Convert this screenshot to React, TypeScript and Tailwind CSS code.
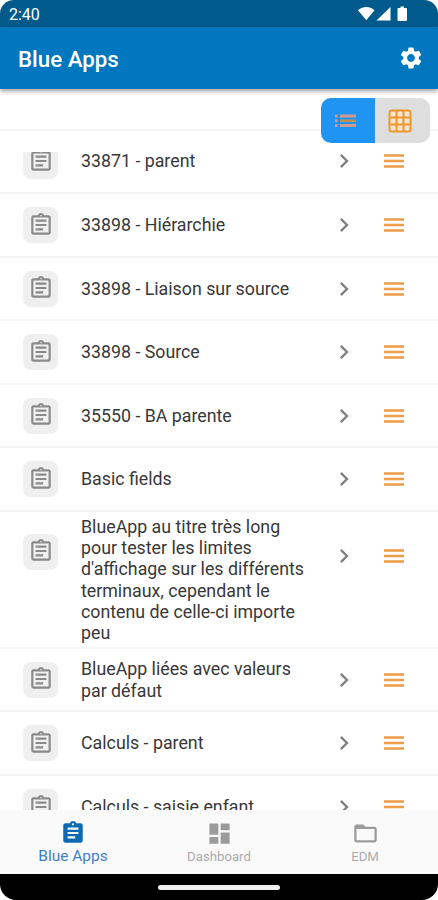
import React from 'react';
import { MdAssignment, MdChevronRight, MdDashboard, MdFolderOpen, MdOutlineAssignment, MdSettings } from 'react-icons/md';

interface AppItem {
  title: string;
  height: string;
  tall?: boolean;
}

const items: AppItem[] = [
  { title: '33871 - parent', height: 'h-[64px]' },
  { title: '33898 - Hiérarchie', height: 'h-[64px]' },
  { title: '33898 - Liaison sur source', height: 'h-[63px]' },
  { title: '33898 - Source', height: 'h-[64px]' },
  { title: '35550 - BA parente', height: 'h-[63px]' },
  { title: 'Basic fields', height: 'h-[64px]' },
  {
    title: "BlueApp au titre très long pour tester les limites d'affichage sur les différents terminaux, cependant le contenu de celle-ci importe peu",
    height: 'h-[137px]',
    tall: true,
  },
  { title: 'BlueApp liées avec valeurs par défaut', height: 'h-[63px]' },
  { title: 'Calculs - parent', height: 'h-[64px]' },
  { title: 'Calculs - saisie enfant', height: 'h-[64px]' },
];

const StatusBar: React.FC = () => (
  <div className="h-[27px] shrink-0 bg-[#005a8c] flex items-center justify-between pl-[9px] pr-[30px] text-white">
    <span className="text-[16px] leading-none mt-[3px]">2:40</span>
    <svg className="w-[51px] h-[17px]" viewBox="0 0 51 17" fill="currentColor">
      <path d="M1 5.200C6 1 12.500 1 17.500 5.200L9.300 15.200z" />
      <path d="M33.500 2v13.500H19.500z" />
      <path d="M43.500 1.500h3.500v1.600h2q1 0 1 1v10.800q0 1-1 1h-7.500q-1 0-1-1v-10.800q0-1 1-1h2z" />
    </svg>
  </div>
);

const ViewToggle: React.FC = () => (
  <div className="relative flex w-[109px] h-[45px] rounded-[10px] overflow-hidden bg-[#dedede]">
    <div className="w-[54px] bg-[#2094f3] flex items-center justify-center">
      <svg className="w-[21px] h-[14px] -ml-[5px]" viewBox="0 0 21 14" fill="#d49a8c">
        <path d="M0 0.500h2.500v3H0zM0 5.500h2.500v2.500H0zM0 10h2.500v3H0z" />
        <path d="M5 0.500h16v3H5zM5 10h16v3H5z" />
        <path fill="#c4914e" d="M5 5.500h16v2.500H5z" />
      </svg>
    </div>
    <div className="flex-1 flex items-center justify-center">
      <svg className="w-[24px] h-[24px] -ml-[5px]" viewBox="0 0 24 24" fill="none" stroke="#f0962a" strokeWidth="2">
        <rect x="1.500" y="1.500" width="21" height="21" rx="2.500" fill="#f3e6d5" />
        <path d="M8.500 1.500v21M15.500 1.500v21M1.500 8.500h21M1.500 15.500h21" />
      </svg>
    </div>
  </div>
);

const ListRow: React.FC<{ item: AppItem }> = ({ item }) => (
  <div className={`${item.height} shrink-0 flex items-center border-b-2 border-[#f5f5f5] pl-[23px]`}>
    <div className={`w-[35px] h-[36px] rounded-[8px] bg-[#efefef] flex items-center justify-center ${item.tall ? '-mt-[56px]' : ''}`}>
      <MdOutlineAssignment className="w-[26px] h-[26px] -mt-px text-[#8a8a8a]" />
    </div>
    <div className="w-[236px] ml-[23px] pr-[8px] text-[17.8px] leading-[21.1px] text-[#383838]">{item.title}</div>
    <MdChevronRight className={`w-[28px] h-[28px] ml-[13px] text-[#808080] ${item.tall ? '-mt-[47px]' : ''}`} />
    <svg className={`w-[20px] h-[16px] ml-[26px] ${item.tall ? '-mt-[47px]' : ''}`} viewBox="0 0 20 16">
      <path d="M0 2.500h20M0 8h20M0 13.500h20" stroke="#eb9d48" strokeWidth="2.500" />
    </svg>
  </div>
);

const BottomNav: React.FC = () => (
  <nav className="h-[64px] shrink-0 bg-[#fafafa] grid grid-cols-3 text-[#9b9b9b]">
    <div className="flex flex-col items-center pt-[10px] text-[#0f6ab4]">
      <MdAssignment className="w-[26px] h-[26px]" />
      <span className="text-[15.5px] leading-[20px] text-[#3f80c5]">Blue Apps</span>
    </div>
    <div className="flex flex-col items-center pt-[10px]">
      <MdDashboard className="w-[27px] h-[27px]" />
      <span className="text-[13.2px] leading-[20px] text-[#acacac]">Dashboard</span>
    </div>
    <div className="flex flex-col items-center pt-[10px]">
      <MdFolderOpen className="w-[27px] h-[27px]" />
      <span className="text-[13.2px] leading-[20px] text-[#acacac]">EDM</span>
    </div>
  </nav>
);

const App: React.FC = () => {
  return (
    <div className="w-full h-[900px] bg-white font-['Roboto',sans-serif]">
      <div className="h-full flex flex-col overflow-hidden rounded-t-[14px] rounded-b-[16px] bg-white">
        <StatusBar />
        <header className="relative h-[62px] shrink-0 bg-[#0077be] shadow-[0_2px_5px_rgba(0,0,0,0.4)] flex items-center justify-between pl-[18px] pr-[14px] text-white">
          <h1 className="text-[22.300px] font-medium pt-[3px]">Blue Apps</h1>
          <MdSettings className="w-[26px] h-[26px]" />
        </header>

        {/* Toolbar, the separator runs behind the toggle */}
        <div className="relative h-[63px] shrink-0 flex justify-end pt-[9px] pr-[8px]">
          <div className="absolute inset-x-0 top-[40px] h-[2px] bg-[#f5f5f5]" />
          <ViewToggle />
        </div>

        <div className="flex-1 min-h-0 overflow-hidden">
          <div className="flex flex-col -mt-[22px]">
            {items.map((item) => (
              <ListRow key={item.title} item={item} />
            ))}
          </div>
        </div>

        <BottomNav />
        <div className="h-[26px] shrink-0 bg-black flex items-center justify-center">
          <div className="w-[122px] h-[5px] rounded-full bg-[#f0f0f0]" />
        </div>
      </div>
    </div>
  );
};

export default App;
